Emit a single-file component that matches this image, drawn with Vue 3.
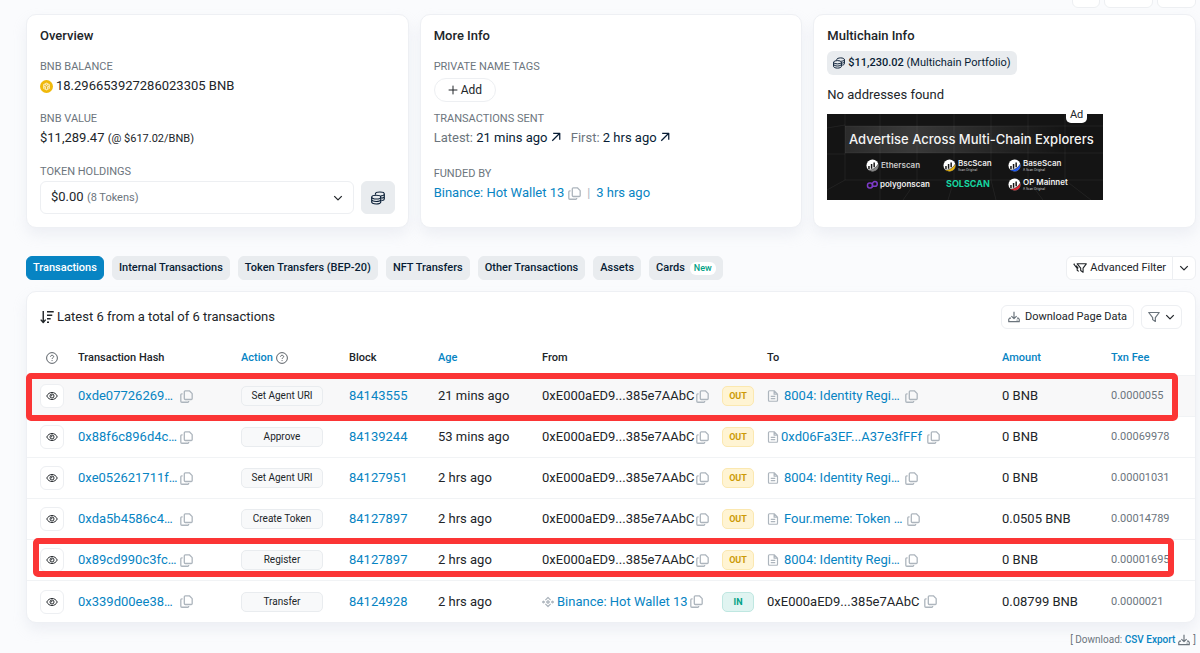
<template>
  <svg class="sprite" aria-hidden="true">
    <symbol id="copy" viewBox="0 0 16 16">
      <path d="M6.5 1h5L15 4.500v6a1.200 1.200 0 0 1-1.200 1.200H6.500A1.200 1.200 0 0 1 5.300 10.500V2.200A1.200 1.200 0 0 1 6.500 1zM3.200 4.700H2.200A1.200 1.200 0 0 0 1 5.900v8A1.200 1.200 0 0 0 2.200 15.100h7.300a1.200 1.200 0 0 0 1.200-1.200v-.4" />
    </symbol>
    <symbol id="coins" viewBox="0 0 16 16">
      <ellipse cx="6" cy="7" rx="5.200" ry="2.200" />
      <path d="M.8 7v5.600c0 1.200 2.300 2.200 5.200 2.200s5.200-1 5.200-2.200V7M.8 9.800C.8 11 3.100 12 6 12s5.200-1 5.200-2.200M5 4.200V3.400C5 2.200 7.300 1.200 10.200 1.200s5 1 5 2.200-2.200 2.200-4.200 2.200M15.200 3.400V9c0 .9-1.300 1.600-3 1.900M15.200 6.200c0 .9-1.300 1.700-3 2" />
    </symbol>
    <symbol id="chevron" viewBox="0 0 16 16">
      <path d="M2 5l6 6 6-6" />
    </symbol>
    <symbol id="arrow" viewBox="0 0 16 16">
      <path d="M3.500 2h10.500v10.500M14 2 2 14" />
    </symbol>
    <symbol id="plus" viewBox="0 0 16 16">
      <path d="M8 1v14M1 8h14" />
    </symbol>
    <symbol id="question" viewBox="0 0 16 16">
      <circle cx="8" cy="8" r="7.200" />
      <path d="M6 6.300c.1-1.300 1-1.900 2.100-1.900s2.100.7 2.100 1.800c0 1.400-2.100 1.500-2.100 3M8.100 10.800v1.300" />
    </symbol>
    <symbol id="eye" viewBox="0 0 16 16">
      <path d="M1 8c1.500-3 4-4.700 7-4.700S13.500 5 15 8c-1.500 3-4 4.700-7 4.700S2.500 11 1 8z" />
      <circle cx="8" cy="8" r="2.700" />
      <path d="M8 6.500A1.500 1.500 0 0 1 6.500 8" />
    </symbol>
    <symbol id="file" viewBox="0 0 16 16">
      <path d="M3.200 1h6.300L14 5.500v8.300A1.200 1.200 0 0 1 12.800 15H3.200A1.200 1.200 0 0 1 2 13.800V2.200A1.200 1.200 0 0 1 3.200 1M9.500 1v4.500H14M5 8.500h6M5 11.500h6" />
    </symbol>
    <symbol id="sort" viewBox="0 0 16 16">
      <path d="M3.700 1v13M.8 11l2.900 3.200L6.500 11M8 2h7.700M8 6h6M8 10h4.200M8 14h2.300" />
    </symbol>
    <symbol id="download" viewBox="0 0 16 16">
      <path d="M8 1v9M4.500 6.800 8 10.200l3.500-3.400M4 9.500H2.200L1 11v3.200h14V11l-1.200-1.500H12M11.500 12.200h1.200" />
    </symbol>
    <symbol id="funnel" viewBox="0 0 16 16">
      <path d="M1 2h14L9.800 8.700v5.300L6.200 11.500V8.700z" />
    </symbol>
    <symbol id="filters" viewBox="0 0 20 16">
      <path d="M6 2h13l-4.600 6.200V14L11 11.500V8.200zM1 2.200l5 6.500v2.500l2.200 1.600M1 2.200h1.500M4.500 4.500 7.500 8.500" />
    </symbol>
    <symbol id="binance" viewBox="0 0 16 16">
      <path d="M4.500 5.500 8 2l3.500 3.500M4.500 10.500 8 14l3.500-3.500M8 6.200 9.800 8 8 9.800 6.200 8zM2 6.800 3.200 8 2 9.200.8 8zM14 6.800 15.200 8 14 9.200 12.800 8z" />
    </symbol>
    <symbol id="scan" viewBox="0 0 14 14">
      <circle cx="7" cy="7" r="6.500" fill="#fff" />
      <path d="M3.200 11V7.500M6 10.500V5.500M8.800 9V3.800" stroke="#161616" stroke-width="1.600" fill="none" />
      <path d="M2.200 12.200C7 12 11 9.500 13.200 5.500 14.500 10 11 13.500 7 13.500c-2 0-3.700-.5-4.800-1.300z" fill="currentColor" stroke="#161616" stroke-width=".5" />
    </symbol>
  </svg>

  <div class="page">
    <header class="page-actions">
      <button type="button" class="action-icon" aria-label="Chat"></button>
      <button type="button" class="action-wide" aria-label="Buy"></button>
      <button type="button" class="action-more" aria-label="More"></button>
    </header>

    <section class="cards">
      <article class="card">
        <h2>Overview</h2>
        <h3>BNB BALANCE</h3>
        <p class="value balance">
          <svg class="bnb" viewBox="0 0 16 16" aria-hidden="true">
            <circle cx="8" cy="8" r="8" fill="#f0b90b" />
            <path d="M8 3.200l4.200 2.400v4.800L8 12.800l-4.200-2.400V5.600z" fill="#fbe9b0" />
            <path d="M5.200 6.300 8 7.900l2.800-1.600M8 7.900v3.300M5.200 9.600l1 .6M10.800 9.600l-1 .6M8 4.700v1" fill="none" stroke="#e0a900" stroke-width="1" />
          </svg>
          <span>18.296653927286023305 BNB</span>
        </p>
        <h3>BNB VALUE</h3>
        <p class="value">$11,289.47 <small class="dark">(@ $617.02/BNB)</small></p>
        <h3>TOKEN HOLDINGS</h3>
        <div class="holdings">
          <button type="button" class="dropdown" aria-haspopup="listbox">
            <span>$0.00 <small>(8 Tokens)</small></span>
            <svg class="icon i10 bold"><use href="#chevron" /></svg>
          </button>
          <button type="button" class="portfolio" aria-label="Portfolio">
            <svg class="icon i14 thin-line"><use href="#coins" /></svg>
          </button>
        </div>
      </article>

      <article class="card more">
        <h2>More Info</h2>
        <h3>PRIVATE NAME TAGS</h3>
        <button type="button" class="add">
          <svg class="icon i10"><use href="#plus" /></svg>Add
        </button>
        <h3>TRANSACTIONS SENT</h3>
        <p class="value sent">
          <span>Latest: <a href="#">21 mins ago <svg class="icon i10 bold"><use href="#arrow" /></svg></a></span>
          <span>First: <a href="#">2 hrs ago <svg class="icon i10 bold"><use href="#arrow" /></svg></a></span>
        </p>
        <h3>FUNDED BY</h3>
        <p class="value funded">
          <a href="#">Binance: Hot Wallet 13</a>
          <svg class="icon i13 copy"><use href="#copy" /></svg>
          <span class="bar">|</span>
          <a href="#">3 hrs ago</a>
        </p>
      </article>

      <article class="card multi">
        <h2>Multichain Info</h2>
        <a href="#" class="multi-badge">
          <svg class="icon i12 thin-line"><use href="#coins" /></svg>
          <span><b>$11,230.02</b> (Multichain Portfolio)</span>
        </a>
        <p class="value">No addresses found</p>
        <a href="#" class="banner">
          <svg viewBox="0 0 276 86">
            <defs>
              <linearGradient id="sheen">
                <stop offset="0" stop-color="#fff" stop-opacity=".1" />
                <stop offset=".3" stop-color="#fff" stop-opacity=".16" />
                <stop offset="1" stop-color="#fff" stop-opacity="0" />
              </linearGradient>
            </defs>
            <rect width="276" height="86" fill="#141414" />
            <path d="M18 0v66L0 76M53 0v86M90 0v66L76 86M127 0v66l-6 20M164 0v66l5 20M201 0v66l15 20M238 0v66l26 20M18 12h258M18 39h258M18 66h258M0 14l18-3M0 40h18" fill="none" stroke="#fff" stroke-opacity=".06" />
            <rect x="18" y="12" width="220" height="27" fill="url(#sheen)" />
            <text x="22" y="30" class="ad-title">Advertise Across Multi-Chain Explorers</text>
            <g v-for="logo in logos" :key="logo.name">
              <use v-if="logo.accent" href="#scan" :x="logo.x" :y="logo.y" width="13" height="13" :color="logo.accent" />
              <text :x="logo.x + logo.dx" :y="logo.y + logo.dy" class="ad-name" :class="{ wide: logo.wide }" :fill="logo.fill">{{ logo.name }}</text>
              <text v-if="logo.sub" :x="logo.x + 15" :y="logo.y + 12" class="ad-sub">{{ logo.sub }}</text>
            </g>
            <g fill="none" stroke="#7d3bc9" stroke-width="1.500">
              <rect x="40.500" y="69" width="5" height="5" rx="2.200" />
              <path d="M45.500 73v-3a2.400 2.400 0 0 1 2.400-2.400 2.300 2.300 0 0 1 0 4.700h-2" />
            </g>
          </svg>
          <span class="ad-tag">Ad</span>
        </a>
      </article>
    </section>

    <div class="tab-bar">
      <nav class="tabs">
        <button v-for="(tab, i) in tabs" :key="tab" type="button" :class="{ active: i === 0 }">
          {{ tab }}<span v-if="tab === 'Cards'" class="new">New</span>
        </button>
      </nav>
      <div class="advanced">
        <button type="button"><svg class="icon filters"><use href="#filters" /></svg>Advanced Filter</button>
        <button type="button" aria-label="More filters"><svg class="icon i10 bold"><use href="#chevron" /></svg></button>
      </div>
    </div>

    <section class="panel">
      <div class="panel-head">
        <p class="summary">
          <svg class="icon i14"><use href="#sort" /></svg>
          <span>Latest 6 from a total of 6 transactions</span>
        </p>
        <div class="tools">
          <button type="button"><svg class="icon i12 grey"><use href="#download" /></svg>Download Page Data</button>
          <button type="button" aria-label="Filter">
            <svg class="icon i12 grey"><use href="#funnel" /></svg>
            <svg class="icon i10 bold"><use href="#chevron" /></svg>
          </button>
        </div>
      </div>

      <table>
        <colgroup>
          <col class="c-eye"><col class="c-hash"><col class="c-action"><col class="c-block"><col class="c-age">
          <col class="c-from"><col class="c-dir"><col class="c-to"><col class="c-amount"><col class="c-fee">
        </colgroup>
        <thead>
          <tr>
            <th class="center"><svg class="icon i12 thin"><use href="#question" /></svg></th>
            <th>Transaction Hash</th>
            <th><span class="cell tight"><a href="#">Action</a><svg class="icon i12 thin"><use href="#question" /></svg></span></th>
            <th>Block</th>
            <th><a href="#">Age</a></th>
            <th>From</th>
            <th></th>
            <th>To</th>
            <th><a href="#">Amount</a></th>
            <th><a href="#">Txn Fee</a></th>
          </tr>
        </thead>
        <tbody>
          <tr v-for="tx in transactions" :key="tx.hash" :class="tx.mark">
            <td class="center">
              <button type="button" class="eye" aria-label="Preview"><svg class="icon i12"><use href="#eye" /></svg></button>
            </td>
            <td>
              <span class="cell snug">
                <a href="#" class="hash">{{ tx.hash }}</a>
                <svg class="icon i13 copy"><use href="#copy" /></svg>
              </span>
            </td>
            <td><span class="method">{{ tx.method }}</span></td>
            <td><a href="#">{{ tx.block }}</a></td>
            <td>{{ tx.age }}</td>
            <td>
              <span class="cell snug">
                <span v-if="tx.dir === 'IN'" class="cell tight">
                  <svg class="icon i12 copy"><use href="#binance" /></svg>
                  <a href="#">Binance: Hot Wallet 13</a>
                </span>
                <span v-else>{{ self }}</span>
                <svg class="icon i13 copy"><use href="#copy" /></svg>
              </span>
            </td>
            <td><span class="dir" :class="tx.dir.toLowerCase()">{{ tx.dir }}</span></td>
            <td>
              <span class="cell">
                <span v-if="tx.dir === 'IN'">{{ self }}</span>
                <span v-else class="cell" :class="{ snug: !tx.named }">
                  <svg class="icon i12 copy"><use href="#file" /></svg>
                  <a href="#" :class="{ named: tx.named }">{{ tx.to }}</a>
                </span>
                <svg class="icon i13 copy"><use href="#copy" /></svg>
              </span>
            </td>
            <td>{{ tx.amount }}</td>
            <td class="fee">{{ tx.fee }}</td>
          </tr>
        </tbody>
      </table>
    </section>

    <footer class="export">
      <span>[ Download: <a href="#">CSV Export</a></span>
      <svg class="icon i12"><use href="#download" /></svg>
      <span>]</span>
    </footer>
  </div>
</template>

<script setup>
const self = '0xE000aED9...385e7AAbC'

const tabs = [
  'Transactions',
  'Internal Transactions',
  'Token Transfers (BEP-20)',
  'NFT Transfers',
  'Other Transactions',
  'Assets',
  'Cards'
]

const transactions = [
  { hash: '0xde07726269…', method: 'Set Agent URI', block: '84143555', age: '21 mins ago', dir: 'OUT', to: '8004: Identity Regi…', named: true, amount: '0 BNB', fee: '0.0000055', mark: 'marked hovered' },
  { hash: '0x88f6c896d4c…', method: 'Approve', block: '84139244', age: '53 mins ago', dir: 'OUT', to: '0xd06Fa3EF...A37e3fFFf', named: false, amount: '0 BNB', fee: '0.00069978' },
  { hash: '0xe052621711f…', method: 'Set Agent URI', block: '84127951', age: '2 hrs ago', dir: 'OUT', to: '8004: Identity Regi…', named: true, amount: '0 BNB', fee: '0.00001031' },
  { hash: '0xda5b4586c4…', method: 'Create Token', block: '84127897', age: '2 hrs ago', dir: 'OUT', to: 'Four.meme: Token …', named: true, amount: '0.0505 BNB', fee: '0.00014789' },
  { hash: '0x89cd990c3fc…', method: 'Register', block: '84127897', age: '2 hrs ago', dir: 'OUT', to: '8004: Identity Regi…', named: true, amount: '0 BNB', fee: '0.00001695', mark: 'marked inset' },
  { hash: '0x339d00ee38…', method: 'Transfer', block: '84124928', age: '2 hrs ago', dir: 'IN', amount: '0.08799 BNB', fee: '0.0000021' }
]

const logos = [
  { name: 'Etherscan', x: 39, y: 45, dx: 15, dy: 9, accent: '#8a8a8a', fill: '#c9c9c9' },
  { name: 'BscScan', x: 116, y: 45, dx: 15, dy: 7, accent: '#f0b90b', fill: '#e8e8e8', sub: 'Scan Original' },
  { name: 'BaseScan', x: 181, y: 45, dx: 15, dy: 7, accent: '#1f5eff', fill: '#e8e8e8', sub: 'A Scan Original' },
  { name: 'polygonscan', x: 39, y: 64, dx: 14, dy: 9, fill: '#f0f0f0' },
  { name: 'SOLSCAN', x: 116, y: 64, dx: 3, dy: 9, fill: '#16d6a0', wide: true },
  { name: 'OP Mainnet', x: 181, y: 64, dx: 15, dy: 7, accent: '#e5232e', fill: '#f0f0f0', sub: 'A Scan Original' }
]
</script>

<style>
body {
  margin: 0;
  background: #fafbfd;
}
</style>

<style scoped>
.sprite {
  display: none;
}

.page {
  padding: 0 4px 0 26px;
  font-family: Roboto, "Liberation Sans", sans-serif;
  font-size: 13px;
  line-height: 20px;
  color: #212529;
}

h2, h3, p {
  margin: 0;
}

a {
  color: #0784c3;
  text-decoration: none;
}

button {
  font: inherit;
  color: inherit;
  padding: 0;
  box-sizing: border-box;
  border: 1px solid #edeff2;
  border-radius: 6px;
  background: #fff;
}

.icon {
  flex: none;
  fill: none;
  stroke: currentColor;
  stroke-width: 1.6;
  stroke-linejoin: round;
}

.i10 { width: 10px; height: 10px; }
.i12 { width: 12px; height: 12px; }
.i13 { width: 13px; height: 13px; }
.i14 { width: 14px; height: 14px; }
.thin { stroke-width: 1.2; color: #495057; }
.thin-line { stroke-width: 1.3; }
.bold { stroke-width: 2; }
.grey { color: #6c757d; }
.copy { color: #adb5bd; }

.page-actions {
  display: flex;
  justify-content: flex-end;
  align-items: flex-end;
  gap: 4px;
  height: 8px;
  overflow: hidden;
}

.page-actions button { height: 24px; }
.action-icon { width: 28px; }
.action-wide { width: 49px; }
.action-more { width: 39px; }

.cards {
  display: grid;
  grid-template-columns: repeat(3, 1fr);
  gap: 11px;
  margin-top: 6px;
}

.card,
.panel {
  border: 1px solid #eef0f4;
  border-radius: 10px;
  background: #fff;
  box-shadow: 0 7px 14px rgba(189, 197, 209, 0.2);
}

.card {
  padding: 12px 13px 13px;
}

h2 {
  font-size: 13px;
  font-weight: 500;
  line-height: 18px;
}

h3 {
  margin: 15px 0 1px;
  font-size: 11px;
  font-weight: 400;
  line-height: 16px;
  color: #6c757d;
}

h2 + h3 {
  margin-top: 14px;
}

.balance,
.funded,
.sent,
.summary {
  display: flex;
  align-items: center;
  gap: 3px;
}

.bnb {
  width: 13px;
  height: 13px;
}

small {
  font-size: 11px;
  color: #6c757d;
}

small.dark {
  color: inherit;
}

.holdings {
  display: flex;
  gap: 7px;
}

.dropdown {
  flex: 1;
  display: flex;
  align-items: center;
  justify-content: space-between;
  height: 33px;
  padding: 0 10px;
}

.portfolio {
  display: grid;
  place-items: center;
  width: 34px;
  border-color: #e9ecef;
  background: #e9ecef;
  color: #081d35;
}

.add {
  display: flex;
  align-items: center;
  gap: 3px;
  height: 24px;
  margin: 3px 0 -6px;
  padding: 0 13px;
  border-radius: 12px;
  font-size: 12px;
}

.sent {
  gap: 10px;
  color: #6c757d;
}

.sent a {
  color: #081d35;
}

.sent + h3 {
  margin-top: 18px;
}

.funded {
  gap: 4px;
}

.bar {
  padding: 0 2px;
  color: #adb5bd;
  font-size: 12px;
}

.multi-badge {
  display: inline-flex;
  align-items: center;
  gap: 3px;
  height: 24px;
  margin: 6px 0 10px;
  padding: 0 6px;
  border-radius: 6px;
  background: #e9ecef;
  color: #081d35;
  font-size: 11px;
  vertical-align: top;
}

.multi-badge b {
  font-weight: 500;
}

.banner {
  position: relative;
  display: block;
  max-width: 276px;
  margin-top: 9px;
}

.banner svg {
  display: block;
  width: 100%;
}

.ad-title {
  font: 500 13px Inter, sans-serif;
  fill: #f4f4f4;
}

.ad-name {
  font: 600 8px Inter, sans-serif;
}

.ad-name.wide {
  font-size: 9px;
  font-weight: 700;
}

.ad-sub {
  font: 500 3px Inter, sans-serif;
  fill: #bbb;
}

.ad-tag {
  position: absolute;
  top: -7px;
  right: 16px;
  padding: 0 4px;
  border-radius: 5px;
  background: #fff;
  color: #212529;
  font-size: 11px;
  line-height: 16px;
}

.tab-bar {
  display: flex;
  justify-content: space-between;
  margin: 28px 0 11px;
  font-size: 11px;
}

.tabs {
  display: flex;
  gap: 8px;
}

.tabs button {
  display: flex;
  align-items: center;
  height: 24px;
  padding: 0 6px;
  border-color: #e9ecef;
  background: #e9ecef;
  color: #081d35;
  font-weight: 500;
}

.tabs .active {
  border-color: #0784c3;
  background: #0784c3;
  color: #fff;
}

.new {
  margin-left: 5px;
  padding: 0 4px;
  border-radius: 6px;
  background: #fff;
  color: #00a186;
  font-size: 9px;
  line-height: 13px;
}

.advanced {
  display: flex;
}

.advanced button {
  display: flex;
  align-items: center;
  gap: 3px;
  height: 24px;
  padding: 0 6px;
}

.advanced button:first-child {
  border-radius: 6px 0 0 6px;
}

.advanced button:last-child {
  margin-left: -1px;
  border-radius: 0 6px 6px 0;
}

.filters {
  width: 14px;
  height: 12px;
}

.panel-head {
  display: flex;
  align-items: center;
  justify-content: space-between;
  padding: 13px 13px 12px;
}

.tools {
  display: flex;
  gap: 7px;
}

.tools button {
  display: flex;
  align-items: center;
  gap: 5px;
  height: 24px;
  padding: 0 6px;
  font-size: 11px;
}

table {
  width: 100%;
  table-layout: fixed;
  border-collapse: separate;
  border-spacing: 0;
}

.c-eye { width: 43px; }
.c-hash { width: 163px; }
.c-action { width: 108px; }
.c-block { width: 89px; }
.c-age { width: 104px; }
.c-from { width: 180px; }
.c-dir { width: 45px; }
.c-to { width: 235px; }
.c-amount { width: 109px; }
.c-fee { width: 92px; }

th,
td {
  box-sizing: border-box;
  padding: 0 0 0 8px;
  border-bottom: 1px solid #f1f3f5;
  text-align: left;
  white-space: nowrap;
}

th {
  height: 35px;
  font-size: 11px;
  font-weight: 500;
}

td {
  height: 41px;
}

tbody tr:last-child td {
  border-bottom: 0;
}

.center {
  padding-left: 13px;
}

th.center svg {
  display: block;
  margin-left: 6px;
}

.hovered td {
  background: #f8f8f9;
}

/* red frame around the highlighted rows */
.marked {
  position: relative;
}

.marked::after {
  content: "";
  position: absolute;
  inset: -3px 17px -4px -1px;
  border: 6px solid #fb3535;
  border-radius: 5px;
  pointer-events: none;
}

.inset::after {
  inset: -2px 21px 4px 6px;
}

.eye {
  display: grid;
  place-items: center;
  width: 24px;
  height: 24px;
}

.eye svg {
  stroke-width: 1.3;
}

.cell {
  display: flex;
  align-items: center;
  gap: 5px;
}

.cell.tight {
  gap: 3px;
}

.cell.snug {
  gap: 2px;
}

.hash {
  min-width: 100px;
}

.named {
  min-width: 114px;
}

.method,
.dir {
  display: block;
  box-sizing: border-box;
  border: 1px solid #e9ecef;
  border-radius: 5px;
  text-align: center;
  font-size: 10px;
  line-height: 18px;
}

.method {
  width: 82px;
  background: #f8f9fa;
}

.dir {
  width: 32px;
  font-size: 9px;
  font-weight: 700;
}

.out {
  border-color: #fbe8b0;
  background: #fff4d3;
  color: #cc9a06;
}

.in {
  border-color: #bfe7e1;
  background: #e0f4f1;
  color: #00a186;
}

.fee {
  font-size: 11px;
  color: #6c757d;
}

.export {
  display: flex;
  align-items: center;
  justify-content: flex-end;
  gap: 3px;
  margin-top: 7px;
  font-size: 10px;
  color: #6c757d;
}

.export a {
  font-weight: 500;
}
</style>
